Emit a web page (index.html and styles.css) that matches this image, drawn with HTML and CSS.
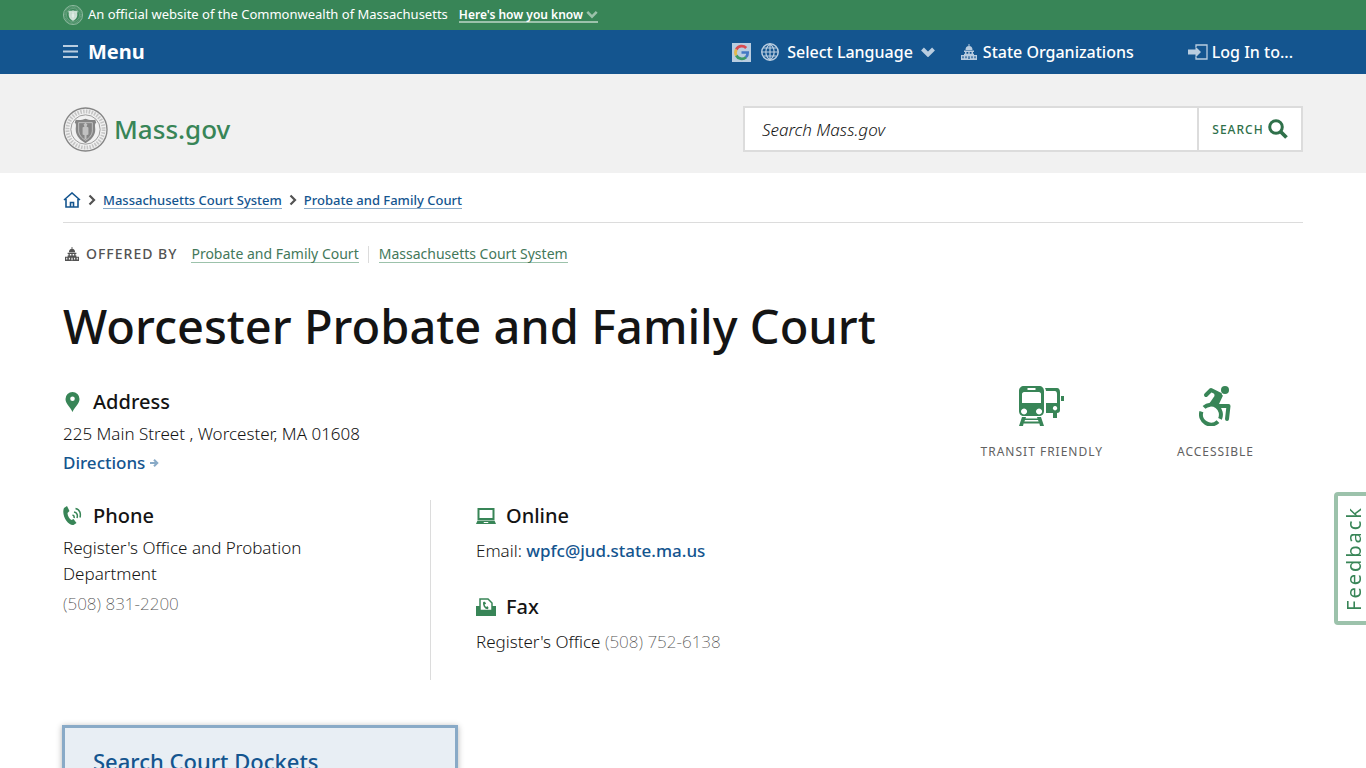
FILE: index.html
```html
<!DOCTYPE html>
<html lang="en">
<head>
    <meta charset="UTF-8">
    <meta name="viewport" content="width=device-width, initial-scale=1.0">
    <title>Worcester Probate and Family Court | Mass.gov</title>
    <link rel="stylesheet" href="styles.css">
</head>
<body>
    <!-- Shared icons -->
    <svg class="sprite" aria-hidden="true">
        <symbol id="icon-seal" viewBox="0 0 46 46">
            <circle cx="23" cy="23" r="22" fill="none" stroke="currentColor" stroke-width="1.4"/>
            <circle cx="23" cy="23" r="18.5" fill="none" stroke="currentColor" stroke-width="4" stroke-dasharray="1.6 1.3" opacity=".4"/>
            <circle cx="23" cy="23" r="15" fill="none" stroke="currentColor" stroke-width=".8"/>
            <path d="M13 13c4 1 7 0 10-1 3 1 6 2 10 1l1 3c-2 1-1 4-1 7 0 7-5 11-10 14-5-3-10-7-10-14 0-3 1-6-1-7z" fill="currentColor"/>
            <path d="M16 16h14v8c0 4-3 8-7 10-4-2-7-6-7-10z" fill="none" stroke="#fff" stroke-width=".7" opacity=".7"/>
            <path d="M23 16l2 2-1 2 2 1v7l-2 1v4h-2v-4l-2-1v-7l2-1-1-2z" fill="#fff" opacity=".5"/>
        </symbol>
        <symbol id="icon-capitol" viewBox="0 0 16 16">
            <path d="M7.5 0h1v2h-1zM4.5 6a3.5 4 0 0 1 7 0zM3 6.5h10V8H3zM4 8h1.5v2H4zm3.3 0h1.4v2H7.3zm3.2 0H12v2h-1.500zM3 9.700h10V11H3zM0 11h16v5H0z" fill="currentColor"/>
            <path d="M2 12.300v2M5 12.300v2M8 12.300V15M11 12.300v2M14 12.300v2" stroke="var(--hole, #fff)" stroke-width="1.200"/>
        </symbol>
        <symbol id="icon-chevron" viewBox="0 0 14 10">
            <path d="M1.500 2L7 7.500 12.500 2" fill="none" stroke="currentColor" stroke-width="3"/>
        </symbol>
        <symbol id="icon-next" viewBox="0 0 8 12">
            <path d="M1.500 1.500L6 6l-4.500 4.500" fill="none" stroke="currentColor" stroke-width="2.200"/>
        </symbol>
    </svg>

    <div class="gov-banner">
        <div class="container gov-banner-inner">
            <svg class="gov-seal" aria-hidden="true"><use href="#icon-seal"/></svg>
            <span>An official website of the Commonwealth of Massachusetts</span>
            <button type="button" class="know-button">Here's how you know
                <svg width="12" height="9" aria-hidden="true"><use href="#icon-chevron"/></svg>
            </button>
        </div>
    </div>

    <nav class="top-nav">
        <div class="container top-nav-inner">
            <button type="button" class="menu-button">
                <svg width="15" height="13" viewBox="0 0 15 13" aria-hidden="true"><path d="M0 1h15M0 6.500h15M0 12h15" stroke="currentColor" stroke-width="2"/></svg>
                Menu
            </button>
            <ul class="utility-nav">
                <li>
                    <button type="button" class="language-button">
                        <svg width="19" height="19" viewBox="0 0 19 19" aria-hidden="true">
                            <path d="M0 0h19v19H0z" fill="#b9cde0"/>
                            <path d="M4.300 6.500A6.200 6.200 0 0 1 14.200 5" fill="none" stroke="#d94b50" stroke-width="2.800"/>
                            <path d="M4.300 12.500a6.200 6.200 0 0 1 0-6" fill="none" stroke="#e3b84c" stroke-width="2.800"/>
                            <path d="M14 14.200a6.200 6.200 0 0 1-9.700-1.700" fill="none" stroke="#3d9a65" stroke-width="2.800"/>
                            <path d="M9.500 9.500h6.200a6 6 0 0 1-2 4.800" fill="none" stroke="#4479c4" stroke-width="2.700"/>
                        </svg>
                        <svg class="globe" width="18" height="18" viewBox="0 0 18 18" aria-hidden="true">
                            <path d="M9 1v16M1 9h16M2.500 5h13M2.500 13h13M9 1C3.500 5 3.500 13 9 17M9 1c5.500 4 5.500 12 0 16" fill="none" stroke="currentColor" stroke-width="1.200"/>
                            <circle cx="9" cy="9" r="8.200" fill="none" stroke="currentColor" stroke-width="1.500"/>
                        </svg>
                        <span>Select Language</span>
                        <svg width="14" height="10" viewBox="0 0 14 10" aria-hidden="true"><path d="M1.500 2L7 7.500 12.500 2" fill="none" stroke="currentColor" stroke-width="4"/></svg>
                    </button>
                </li>
                <li>
                    <a href="#" class="organizations-link">
                        <svg width="16" height="16" aria-hidden="true"><use href="#icon-capitol"/></svg>
                        State Organizations
                    </a>
                </li>
                <li>
                    <button type="button" class="login-button">
                        <svg width="20" height="16" viewBox="0 0 20 16" aria-hidden="true">
                            <path d="M8 3V1h11v14H8v-2" fill="none" stroke="currentColor" stroke-width="1.300"/>
                            <path d="M0 5.500h7.500V2.500L13 8l-5.500 5.500v-3H0z" fill="currentColor"/>
                        </svg>
                        <span>Log In to...</span>
                    </button>
                </li>
            </ul>
        </div>
    </nav>

    <header class="site-header">
        <div class="container site-header-inner">
            <a href="#" class="logo">
                <svg class="logo-seal" aria-hidden="true"><use href="#icon-seal"/></svg>
                <span>Mass.gov</span>
            </a>
            <form class="search-form">
                <input type="search" aria-label="Search Mass.gov" placeholder="Search Mass.gov">
                <button type="submit">Search
                    <svg width="20" height="20" viewBox="0 0 20 20" aria-hidden="true">
                        <circle cx="8" cy="8" r="6.300" fill="none" stroke="currentColor" stroke-width="3"/>
                        <path d="M12.500 12.500l6 6" stroke="currentColor" stroke-width="3.800"/>
                    </svg>
                </button>
            </form>
        </div>
    </header>

    <main class="container">
        <nav class="breadcrumbs" aria-label="Breadcrumbs">
            <a href="#" class="home-link" aria-label="Home">
                <svg width="18" height="16" viewBox="0 0 18 16" aria-hidden="true">
                    <path d="M1 8l8-7 8 7M3 7v8h12V7M7.500 15v-4.500h3V15" fill="none" stroke="currentColor" stroke-width="1.600"/>
                </svg>
            </a>
            <svg class="separator" aria-hidden="true"><use href="#icon-next"/></svg>
            <a href="#">Massachusetts Court System</a>
            <svg class="separator" aria-hidden="true"><use href="#icon-next"/></svg>
            <a href="#">Probate and Family Court</a>
        </nav>

        <div class="offered-by">
            <svg width="14" height="14" aria-hidden="true"><use href="#icon-capitol"/></svg>
            <span class="offered-by-label">Offered by</span>
            <ul>
                <li><a href="#">Probate and Family Court</a></li>
                <li><a href="#">Massachusetts Court System</a></li>
            </ul>
        </div>

        <h1>Worcester Probate and Family Court</h1>

        <div class="location">
            <section class="address">
                <h2>
                    <svg width="20" height="20" viewBox="0 0 20 20" aria-hidden="true">
                        <path d="M9.500 0a7 7 0 0 0-7 7c0 5 4.500 7.500 7 13 2.500-5.500 7-8 7-13a7 7 0 0 0-7-7zm0 4.500a2.300 2.300 0 1 1 0 4.600 2.300 2.300 0 0 1 0-4.600z" fill="currentColor" fill-rule="evenodd"/>
                    </svg>
                    Address
                </h2>
                <p class="street">225 Main Street , Worcester, MA 01608</p>
                <a href="#" class="directions">Directions
                    <svg width="9" height="8" viewBox="0 0 9 8" aria-hidden="true"><path d="M0 4h7M4 .7L7.300 4 4 7.300" fill="none" stroke="currentColor" stroke-width="2"/></svg>
                </a>
            </section>
            <ul class="features">
                <li>
                    <svg width="46" height="40" viewBox="0 0 46 40" aria-hidden="true">
                        <path d="M5 0h15c3 0 5 2 5 5v20c0 3-2 5-5 5H5c-3 0-5-2-5-5V5c0-3 2-5 5-5zm3.500 2v2h8V2zM5 6c-1 0-2 1-2 2v9h19V8c0-1-1-2-2-2zm0 16.500a3 3 0 1 0 .1 0zm15 0a3 3 0 1 0 .1 0z" fill="currentColor" fill-rule="evenodd"/>
                        <path d="M3 31h4l-.5 1.500h12L18 31h4l3 9h-4l-.6-2.500H4.600L4 40H0zM6 34l-.6 1.500h14.200L19 34z" fill="currentColor" fill-rule="evenodd"/>
                        <path d="M26 2h12c2 0 3 2 3 4v18c0 2-1 3-3 3v5h-4v-5h-7V17h11V8c0-2-1-3-2-3h-9c0-1-.500-2-1-3zm10 18a2.200 2.200 0 1 0 .1 0zM42 10h3v5h-3z" fill="currentColor" fill-rule="evenodd"/>
                    </svg>
                    <span>Transit Friendly</span>
                </li>
                <li>
                    <svg width="32" height="40" viewBox="0 0 32 40" aria-hidden="true">
                        <circle cx="26" cy="4" r="4" fill="currentColor"/>
                        <path d="M7 9l5-5 9 4.500M20 20h9.500L28 33" fill="none" stroke="currentColor" stroke-width="4" stroke-linejoin="round" stroke-linecap="round"/>
                        <path d="M15 5l9 4.500-4 8.500v3l-5-2.500-5-.5 5.500-8z" fill="currentColor"/>
                        <path d="M5 21.400A10 10 0 0 1 21 32.800M19 35.600A10 10 0 0 1 2.400 25.600" fill="none" stroke="currentColor" stroke-width="4"/>
                    </svg>
                    <span>Accessible</span>
                </li>
            </ul>
        </div>

        <div class="contact">
            <section class="phone">
                <h2>
                    <svg width="20" height="20" viewBox="0 0 20 20" aria-hidden="true">
                        <path d="M1 2l3-2 2.500 5-2 2c0 3 2 6 4 7l2-1 3 4-3 2C5 20-2 9 1 2z" fill="currentColor"/>
                        <path d="M9.500 9c1.500.500 2 1.500 1.500 3M11 6c3 .500 4 3 3 6M12.500 2.500c4.500 1 5.500 5 4.500 9" fill="none" stroke="currentColor" stroke-width="1.500"/>
                    </svg>
                    Phone
                </h2>
                <p class="label">Register's Office and Probation Department</p>
                <a href="tel:5088312200" class="number">(508) 831-2200</a>
            </section>
            <div class="contact-more">
                <section>
                    <h2>
                        <svg width="20" height="20" viewBox="0 0 20 20" aria-hidden="true">
                            <path d="M1.500 2h17v12h-17zM3.500 4v8h13V4zM1.500 14.500h17L20 18H0zM8 16l-.5 1h5l-.500-1z" fill="currentColor" fill-rule="evenodd"/>
                        </svg>
                        Online
                    </h2>
                    <p>Email: <a href="mailto:wpfc@jud.state.ma.us">wpfc@jud.state.ma.us</a></p>
                </section>
                <section>
                    <h2>
                        <svg width="20" height="20" viewBox="0 0 20 20" aria-hidden="true">
                            <path d="M0 9h20v10H0z" fill="currentColor"/>
                            <path d="M4 13.500V2h8l4 4v7.500z" fill="#fff" stroke="currentColor" stroke-width="1.500"/>
                            <path d="M8 5c-1 3 1 6.500 4 6.500M8 5l1.500 2M12 11.500l-1-2" fill="none" stroke="currentColor" stroke-width="1.600"/>
                        </svg>
                        Fax
                    </h2>
                    <p>Register's Office <a href="tel:5087526138" class="number">(508) 752-6138</a></p>
                </section>
            </div>
        </div>

        <a href="#" class="callout">Search Court Dockets</a>
    </main>

    <button type="button" class="feedback">Feedback</button>
</body>
</html>
```
FILE: styles.css
```css
* {
    box-sizing: border-box;
}

body {
    margin: 0;
    background: #fff;
    color: #141414;
    font-family: "Noto Sans", sans-serif;
    font-size: 17px;
    font-weight: 300;
    line-height: 26px;
}

svg {
    flex-shrink: 0;
}

button {
    padding: 0;
    border: 0;
    background: none;
    color: inherit;
    font-family: inherit;
    cursor: pointer;
}

a {
    color: #14558f;
    text-decoration: none;
}

ul {
    margin: 0;
    padding: 0;
    list-style: none;
}

h1, h2, p {
    margin: 0;
}

.sprite {
    position: absolute;
    width: 0;
    height: 0;
}

.container {
    width: calc(100% - 126px);
    max-width: 1240px;
    margin: 0 auto;
}

/* Green banner */
.gov-banner {
    background: #388557;
    color: #fff;
    font-size: 13px;
    font-weight: 400;
}

.gov-banner-inner {
    display: flex;
    align-items: center;
    height: 30px;
}

.gov-banner span {
    padding-bottom: 2px;
}

.gov-seal {
    width: 20px;
    height: 20px;
    margin-right: 5px;
    color: #c3dacc;
}

.know-button {
    display: flex;
    align-items: center;
    gap: 3px;
    height: 16px;
    margin-left: 11px;
    border-bottom: 2px solid #9cc2ab;
    font-size: 12px;
    font-weight: 600;
}

.know-button svg {
    color: #9cc2ab;
}

/* Blue bar */
.top-nav {
    background: #14558f;
    color: #fff;
}

.top-nav-inner {
    display: flex;
    align-items: center;
    justify-content: space-between;
    height: 44px;
}

.top-nav svg {
    --hole: #14558f;
    color: #b9cde0;
}

.menu-button {
    display: flex;
    align-items: center;
    gap: 10px;
    padding-bottom: 2px;
    font-size: 20px;
    font-weight: 700;
}

.utility-nav {
    display: flex;
    align-items: center;
    margin-right: 10px;
}

.utility-nav button,
.utility-nav a {
    display: flex;
    align-items: center;
    color: #fff;
    font-size: 16px;
    font-weight: 500;
}

.language-button {
    gap: 8px;
}

.globe {
    margin-left: 2px;
}

.utility-nav .organizations-link {
    gap: 6px;
    margin: 0 54px 0 26px;
}

.login-button {
    gap: 4px;
}

/* Logo and search */
.site-header {
    background: #f1f1f1;
}

.site-header-inner {
    display: flex;
    align-items: center;
    justify-content: space-between;
    height: 99px;
    padding-top: 11px;
}

.logo {
    display: flex;
    align-items: center;
    gap: 6px;
    color: #388557;
    font-size: 26px;
    font-weight: 500;
}

.logo-seal {
    width: 45px;
    height: 45px;
    color: #858585;
}

.search-form {
    display: flex;
    width: 560px;
    height: 46px;
    border: 2px solid #dcdcdc;
    background: #fff;
}

.search-form input {
    flex: 1;
    min-width: 0;
    padding: 0 17px;
    border: 0;
    font: italic 300 17px "Noto Sans", sans-serif;
    color: #141414;
}

.search-form input::placeholder {
    color: #141414;
    opacity: 1;
}

.search-form button {
    display: flex;
    align-items: center;
    justify-content: center;
    gap: 4px;
    width: 104px;
    border-left: 2px solid #dcdcdc;
    color: #2f704a;
    font-size: 12px;
    font-weight: 500;
    letter-spacing: 1px;
    text-transform: uppercase;
}

/* Breadcrumbs */
.breadcrumbs {
    display: flex;
    align-items: center;
    height: 50px;
    padding-top: 5px;
    border-bottom: 1px solid #dcdcdc;
    font-size: 13px;
    font-weight: 500;
    line-height: 16px;
}

.breadcrumbs a {
    border-bottom: 1px solid #89aac7;
}

.breadcrumbs .home-link {
    display: flex;
    border: 0;
}

.separator {
    width: 8px;
    height: 12px;
    margin: 0 7px;
    color: #535353;
}

.offered-by {
    display: flex;
    align-items: center;
    margin-top: 18px;
    padding-left: 2px;
    color: #535353;
    font-size: 14px;
}

.offered-by-label {
    margin: 0 14px 0 7px;
    font-weight: 500;
    letter-spacing: 1px;
    text-transform: uppercase;
}

.offered-by ul {
    display: flex;
    font-weight: 400;
    line-height: 16px;
}

.offered-by li + li {
    margin-left: 9px;
    padding-left: 10px;
    border-left: 1px solid #dcdcdc;
}

.offered-by a {
    display: block;
    border-bottom: 1px solid #9cc2ab;
    color: #43785a;
}

h1 {
    margin-top: 27px;
    font-size: 47px;
    font-weight: 500;
    line-height: 64px;
}

h2 {
    display: flex;
    align-items: center;
    gap: 10px;
    font-size: 20px;
    font-weight: 500;
    line-height: 28px;
}

h2 svg {
    color: #388557;
}

/* Address and features */
.location {
    display: flex;
    justify-content: space-between;
    margin-top: 28px;
}

.address {
    padding-top: 2px;
}

.street {
    margin-top: 5px;
}

.directions {
    display: flex;
    align-items: center;
    gap: 5px;
    margin-top: 3px;
    font-weight: 500;
}

.directions svg {
    color: #89aac7;
}

.features {
    display: flex;
    gap: 74px;
    margin-right: 49px;
    color: #388557;
}

.features li {
    display: flex;
    flex-direction: column;
    align-items: center;
    gap: 13px;
}

.features span {
    color: #616161;
    font-size: 12px;
    font-weight: 400;
    letter-spacing: 1px;
    text-transform: uppercase;
}

/* Phone, online, fax */
.contact {
    display: flex;
    margin-top: 24px;
}

.phone {
    width: 368px;
    min-height: 180px;
    padding: 2px 90px 0 0;
    border-right: 1px solid #dcdcdc;
}

.phone .label {
    margin: 5px 0 4px;
}

.number {
    color: #535353;
    font-weight: 200;
}

.contact-more {
    padding: 2px 0 0 45px;
}

.contact-more section + section {
    margin-top: 29px;
}

.contact-more p {
    margin-top: 8px;
}

.contact-more a[href^="mailto"] {
    font-weight: 500;
}

/* Call to action */
.callout {
    display: block;
    width: 396px;
    margin: 45px 0 0 -1px;
    padding: 17px 28px;
    border: 3px solid #89aac7;
    background: #e8eef4;
    box-shadow: 0 1px 6px rgba(0, 0, 0, 0.3);
    font-size: 22px;
    font-weight: 500;
    line-height: 32px;
}

.feedback {
    position: fixed;
    top: 492px;
    right: -4px;
    height: 133px;
    width: 36px;
    padding-right: 4px;
    border: 4px solid #9cc2ab;
    border-radius: 4px;
    background: #fff;
    color: #388557;
    font-size: 20px;
    letter-spacing: 2px;
    line-height: 24px;
    writing-mode: vertical-rl;
    transform: rotate(180deg);
}
```
